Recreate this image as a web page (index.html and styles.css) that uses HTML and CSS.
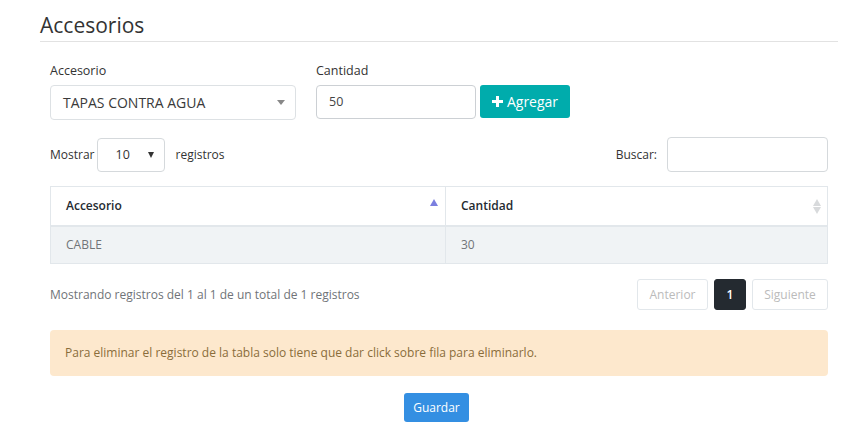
FILE: index.html
```html
<!DOCTYPE html>
<html>
<head>
<meta charset="utf-8">
<link rel="stylesheet" href="styles.css">
</head>
<body>
<div class="page">
  <h1 class="title">Accesorios</h1>
  <div class="panel">
    <div class="form-row">
      <div class="field field-acc">
        <label class="lbl">Accesorio</label>
        <div class="select-lg"><span>TAPAS CONTRA AGUA</span><span class="caret-lg"></span></div>
      </div>
      <div class="field field-qty">
        <label class="lbl">Cantidad</label>
        <div class="qty-group">
          <div class="input-lg">50</div>
          <button class="btn-add"><svg class="plus" width="11" height="11" viewBox="0 0 11 11"><rect x="4" y="0" width="3" height="11" fill="#fff"/><rect x="0" y="4" width="11" height="3" fill="#fff"/></svg>Agregar</button>
        </div>
      </div>
    </div>

    <div class="dt-top">
      <div class="len">Mostrar <div class="select-sm"><span>10</span><span class="caret-sm"></span></div> registros</div>
      <div class="search">Buscar: <div class="input-search"></div></div>
    </div>

    <table class="tbl">
      <thead>
        <tr>
          <th class="c1">Accesorio<span class="sort-up"></span></th>
          <th class="c2">Cantidad<span class="sort-both"><span class="su"></span><span class="sd"></span></span></th>
        </tr>
      </thead>
      <tbody>
        <tr><td>CABLE</td><td>30</td></tr>
      </tbody>
    </table>

    <div class="dt-bottom">
      <div class="info">Mostrando registros del 1 al 1 de un total de 1 registros</div>
      <div class="pager">
        <span class="pg disabled prev">Anterior</span>
        <span class="pg active">1</span>
        <span class="pg disabled next">Siguiente</span>
      </div>
    </div>

    <div class="alert">Para eliminar el registro de la tabla solo tiene que dar click sobre fila para eliminarlo.</div>

    <div class="actions"><button class="btn-save">Guardar</button></div>
  </div>
</div>
</body>
</html>
```
FILE: styles.css
```css
* { box-sizing: border-box; }
html, body { margin: 0; padding: 0; background: #fff; }
body { font-family: "Open Sans", "Liberation Sans", sans-serif; font-size: 12px; color: #333; }
.page { padding: 10px 24px 0 40px; }
.title { margin: 0; font-size: 21px; font-weight: 400; color: #333; line-height: 30px; padding-bottom: 1px; border-bottom: 1px solid #e2e2e2; }
.panel { padding: 0 10px; }
.form-row { display: flex; margin-top: 21px; }
.field-acc { width: 246px; margin-right: 20px; }
.lbl { display: block; font-size: 12.5px; color: #333; line-height: 16px; margin-bottom: 6px; }
.select-lg { height: 35px; border: 1px solid #dde1e4; border-radius: 4px; display: flex; align-items: center; justify-content: space-between; padding: 0 12px; font-size: 14px; color: #3a3a3a; }
.caret-lg { width: 0; height: 0; border-left: 4px solid transparent; border-right: 4px solid transparent; border-top: 5px solid #888; margin-right: -2px; }
.qty-group { display: flex; align-items: flex-start; }
.input-lg { width: 160px; height: 34px; border: 1px solid #ccd0d4; border-radius: 4px; padding: 0 12px; line-height: 32px; font-size: 12.5px; color: #444; }
.btn-add { margin-left: 4px; height: 33px; width: 90px; border: none; border-radius: 3px; background: #00acac; color: #fff; font-family: inherit; font-size: 14px; padding: 0; display: flex; align-items: center; justify-content: center; }
.plus { margin-right: 4px; }
.dt-top { display: flex; justify-content: space-between; align-items: center; margin-top: 17px; }
.len, .search { display: flex; align-items: center; font-size: 12px; color: #333; }
.select-sm { width: 68px; height: 34px; border: 1px solid #d5d9dc; border-radius: 4px; margin: 0 10px 0 3px; display: flex; align-items: center; justify-content: space-between; padding: 0 10px 0 17px; font-size: 12.5px; }
.caret-sm { width: 0; height: 0; border-left: 3.5px solid transparent; border-right: 3.5px solid transparent; border-top: 6px solid #333; }
.input-search { width: 161px; height: 35px; border: 1px solid #d5d9dc; border-radius: 4px; margin-left: 10px; }
.tbl { width: 100%; border-collapse: collapse; margin-top: 14px; border: 1px solid #e2e7eb; }
.tbl th, .tbl td { text-align: left; padding: 0 15px; border: 1px solid #e2e7eb; }
.tbl th { height: 39px; font-weight: 600; font-size: 12px; color: #242a30; border-bottom: 2px solid #e2e7eb; position: relative; }
.tbl td { height: 38px; background: #f0f3f5; color: #707478; font-size: 12px; }
.tbl .c1 { width: 395px; }
.sort-up { position: absolute; right: 7px; top: 12px; width: 0; height: 0; border-left: 4.5px solid transparent; border-right: 4.5px solid transparent; border-bottom: 7px solid #7b7fdf; }
.sort-both { position: absolute; right: 6px; top: 12px; display: flex; flex-direction: column; gap: 1px; }
.su { width: 0; height: 0; border-left: 4.5px solid transparent; border-right: 4.5px solid transparent; border-bottom: 7px solid #d8dadc; }
.sd { width: 0; height: 0; border-left: 4.5px solid transparent; border-right: 4.5px solid transparent; border-top: 7px solid #d8dadc; }
.dt-bottom { display: flex; justify-content: space-between; align-items: center; margin-top: 15px; }
.info { color: #707478; font-size: 12px; }
.pager { display: flex; gap: 6px; }
.pg { height: 31px; line-height: 29px; border: 1px solid #e2e7eb; border-radius: 3px; text-align: center; font-size: 12px; }
.pg.prev { width: 71px; }
.pg.next { width: 76px; }
.pg.disabled { color: #bbb; background: #fff; }
.pg.active { width: 32px; background: #242a30; border-color: #242a30; color: #fff; font-weight: 600; }
.alert { margin-top: 20px; background: #fde8cd; border-radius: 4px; padding: 0 15px; height: 46px; line-height: 46px; color: #8a6d3b; font-size: 12px; }
.actions { display: flex; justify-content: center; margin-top: 17px; }
.btn-save { background: #348fe2; color: #fff; border: none; border-radius: 3px; font-family: inherit; font-size: 12px; height: 29px; width: 65px; padding: 0; margin-left: -5px; }
```
